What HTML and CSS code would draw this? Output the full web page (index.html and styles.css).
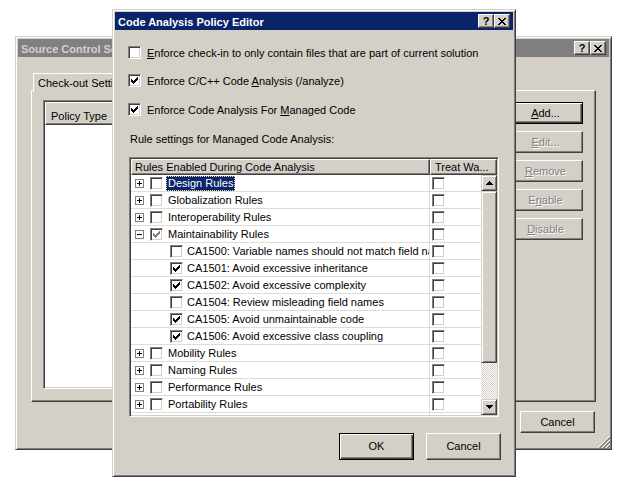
FILE: index.html
```html
<!DOCTYPE html>
<html lang="en">
<head>
<meta charset="utf-8">
<title>Code Analysis Policy Editor</title>
<link rel="stylesheet" href="styles.css">
</head>
<body>
<svg class="defs" aria-hidden="true">
  <symbol id="i-chk" viewBox="0 0 11 11"><path fill="currentColor" d="M2 4h1v3h-1z M3 5h1v3h-1z M4 6h1v3h-1z M5 5h1v3h-1z M6 4h1v3h-1z M7 3h1v3h-1z M8 2h1v3h-1z"/></symbol>
  <symbol id="i-x" viewBox="0 0 8 7"><path fill="currentColor" d="M0 0h2v1h-2z M6 0h2v1h-2z M1 1h2v1h-2z M5 1h2v1h-2z M2 2h4v1h-4z M3 3h2v1h-2z M2 4h4v1h-4z M1 5h2v1h-2z M5 5h2v1h-2z M0 6h2v1h-2z M6 6h2v1h-2z"/></symbol>
  <symbol id="i-plus" viewBox="0 0 9 9"><rect x="0.5" y="0.5" width="8" height="8" fill="#fff" stroke="#808080"/><path fill="#000" d="M2 4h5v1h-5z M4 2h1v5h-1z"/></symbol>
  <symbol id="i-minus" viewBox="0 0 9 9"><rect x="0.5" y="0.5" width="8" height="8" fill="#fff" stroke="#808080"/><path fill="#000" d="M2 4h5v1h-5z"/></symbol>
  <symbol id="i-up" viewBox="0 0 7 4"><path fill="#000" d="M3 0h1v1h-1z M2 1h3v1h-3z M1 2h5v1h-5z M0 3h7v1h-7z"/></symbol>
  <symbol id="i-down" viewBox="0 0 7 4"><path fill="#000" d="M0 0h7v1h-7z M1 1h5v1h-5z M2 2h3v1h-3z M3 3h1v1h-1z"/></symbol>
  <symbol id="i-grip" viewBox="0 0 12 12">
    <g shape-rendering="crispEdges" stroke-width="1">
      <line x1="12" y1="0" x2="0" y2="12" stroke="#fff"/>
      <line x1="12" y1="1" x2="1" y2="12" stroke="#808080"/>
      <line x1="12" y1="2" x2="2" y2="12" stroke="#808080"/>
      <line x1="12" y1="4" x2="4" y2="12" stroke="#fff"/>
      <line x1="12" y1="5" x2="5" y2="12" stroke="#808080"/>
      <line x1="12" y1="6" x2="6" y2="12" stroke="#808080"/>
      <line x1="12" y1="8" x2="8" y2="12" stroke="#fff"/>
      <line x1="12" y1="9" x2="9" y2="12" stroke="#808080"/>
      <line x1="12" y1="10" x2="10" y2="12" stroke="#808080"/>
    </g>
  </symbol>
</svg>

<!-- Background window: Source Control Settings -->
<div class="win win-back">
  <div class="titlebar titlebar-inactive">
    <span class="title">Source Control Settings</span>
    <div class="tbtns">
      <span class="tbtn">?</span>
      <span class="tbtn"><svg class="ic-x"><use href="#i-x"/></svg></span>
    </div>
  </div>
  <div class="bbody">
    <div class="tabstrip">
      <div class="tab">Check-out Settings</div>
    </div>
    <div class="tabpanel">
      <div class="plist">
        <div class="plist-head">
          <div class="ph-cell">Policy Type</div>
          <div class="ph-cell ph-rest"></div>
        </div>
      </div>
      <div class="side-btns">
        <button class="btn btn-sm btn-default"><u>A</u>dd...</button>
        <button class="btn btn-sm btn-dis"><u>E</u>dit...</button>
        <button class="btn btn-sm btn-dis"><u>R</u>emove</button>
        <button class="btn btn-sm btn-dis">E<u>n</u>able</button>
        <button class="btn btn-sm btn-dis"><u>D</u>isable</button>
      </div>
    </div>
    <div class="bfoot">
      <button class="btn btn-sm btn-cancel-back">Cancel</button>
    </div>
  </div>
  <svg class="grip"><use href="#i-grip"/></svg>
</div>

<!-- Foreground window: Code Analysis Policy Editor -->
<div class="win win-front">
  <div class="titlebar titlebar-active">
    <span class="title">Code Analysis Policy Editor</span>
    <div class="tbtns">
      <span class="tbtn">?</span>
      <span class="tbtn"><svg class="ic-x"><use href="#i-x"/></svg></span>
    </div>
  </div>
  <div class="fbody">
    <div class="chk-row">
      <span class="cb cb-3d"></span>
      <span class="chk-text"><u>E</u>nforce check-in to only contain files that are part of current solution</span>
    </div>
    <div class="chk-row r2">
      <span class="cb cb-3d"><svg><use href="#i-chk"/></svg></span>
      <span class="chk-text">Enforce C/C++ Code <u>A</u>nalysis (/analyze)</span>
    </div>
    <div class="chk-row r3">
      <span class="cb cb-3d"><svg><use href="#i-chk"/></svg></span>
      <span class="chk-text">Enforce Code Analysis For <u>M</u>anaged Code</span>
    </div>
    <div class="section-label">Rule settings for Managed Code Analysis:</div>

    <div class="rules-list">
      <div class="rl-head">
        <div class="rh-cell rh-1">Rules Enabled During Code Analysis</div>
        <div class="rh-cell rh-2">Treat Wa...</div>
      </div>
      <div class="rl-body">
        <div class="rows">
          <div class="tr"><div class="c1"><svg class="exp"><use href="#i-plus"/></svg><span class="cb"></span><span class="lbl sel">Design Rules</span></div><div class="c2"><span class="cb"></span></div></div>
          <div class="tr"><div class="c1"><svg class="exp"><use href="#i-plus"/></svg><span class="cb"></span><span class="lbl">Globalization Rules</span></div><div class="c2"><span class="cb"></span></div></div>
          <div class="tr"><div class="c1"><svg class="exp"><use href="#i-plus"/></svg><span class="cb"></span><span class="lbl">Interoperability Rules</span></div><div class="c2"><span class="cb"></span></div></div>
          <div class="tr"><div class="c1"><svg class="exp"><use href="#i-minus"/></svg><span class="cb cb-mixed"><svg><use href="#i-chk"/></svg></span><span class="lbl">Maintainability Rules</span></div><div class="c2"><span class="cb"></span></div></div>
          <div class="tr child"><div class="c1"><span class="cb"></span><span class="lbl">CA1500: Variable names should not match field names</span></div><div class="c2"><span class="cb"></span></div></div>
          <div class="tr child"><div class="c1"><span class="cb"><svg><use href="#i-chk"/></svg></span><span class="lbl">CA1501: Avoid excessive inheritance</span></div><div class="c2"><span class="cb"></span></div></div>
          <div class="tr child"><div class="c1"><span class="cb"><svg><use href="#i-chk"/></svg></span><span class="lbl">CA1502: Avoid excessive complexity</span></div><div class="c2"><span class="cb"></span></div></div>
          <div class="tr child"><div class="c1"><span class="cb"></span><span class="lbl">CA1504: Review misleading field names</span></div><div class="c2"><span class="cb"></span></div></div>
          <div class="tr child"><div class="c1"><span class="cb"><svg><use href="#i-chk"/></svg></span><span class="lbl">CA1505: Avoid unmaintainable code</span></div><div class="c2"><span class="cb"></span></div></div>
          <div class="tr child"><div class="c1"><span class="cb"><svg><use href="#i-chk"/></svg></span><span class="lbl">CA1506: Avoid excessive class coupling</span></div><div class="c2"><span class="cb"></span></div></div>
          <div class="tr"><div class="c1"><svg class="exp"><use href="#i-plus"/></svg><span class="cb"></span><span class="lbl">Mobility Rules</span></div><div class="c2"><span class="cb"></span></div></div>
          <div class="tr"><div class="c1"><svg class="exp"><use href="#i-plus"/></svg><span class="cb"></span><span class="lbl">Naming Rules</span></div><div class="c2"><span class="cb"></span></div></div>
          <div class="tr"><div class="c1"><svg class="exp"><use href="#i-plus"/></svg><span class="cb"></span><span class="lbl">Performance Rules</span></div><div class="c2"><span class="cb"></span></div></div>
          <div class="tr"><div class="c1"><svg class="exp"><use href="#i-plus"/></svg><span class="cb"></span><span class="lbl">Portability Rules</span></div><div class="c2"><span class="cb"></span></div></div>
          <div class="tr"><div class="c1"><svg class="exp"><use href="#i-plus"/></svg><span class="cb"></span><span class="lbl">Reliability Rules</span></div><div class="c2"><span class="cb"></span></div></div>
        </div>
        <div class="vscroll">
          <div class="sb-btn"><svg class="arrow"><use href="#i-up"/></svg></div>
          <div class="sb-thumb"></div>
          <div class="sb-track"></div>
          <div class="sb-btn"><svg class="arrow"><use href="#i-down"/></svg></div>
        </div>
      </div>
    </div>

    <div class="dlg-buttons">
      <button class="btn btn-lg btn-default">OK</button>
      <button class="btn btn-lg">Cancel</button>
    </div>
  </div>
</div>
</body>
</html>
```
FILE: styles.css
```css
* { box-sizing: border-box; }
html, body { margin: 0; padding: 0; }
body {
  width: 628px;
  height: 487px;
  overflow: hidden;
  position: relative;
  background: #fff;
  font-family: "Liberation Sans", Arial, sans-serif;
  font-size: 11px;
  line-height: 13px;
  color: #000;
}
.defs { position: absolute; width: 0; height: 0; overflow: hidden; }
u { text-decoration: underline; text-underline-offset: 1px; text-decoration-thickness: 1px; }

/* ---------- window frame ---------- */
.win {
  position: absolute;
  display: flex;
  flex-direction: column;
  background: #d4d0c8;
  border: 1px solid;
  border-color: #d4d0c8 #404040 #404040 #d4d0c8;
  box-shadow: inset 1px 1px #fff, inset -1px -1px #808080;
  padding: 2px;
}
.win-back { left: 15px; top: 36px; width: 597px; height: 414px; z-index: 1; }
.win-front { left: 112px; top: 9px; width: 404px; height: 468px; z-index: 2; }

.titlebar {
  flex: none;
  height: 18px;
  display: flex;
  align-items: center;
  padding: 0 3px 0 3px;
}
.titlebar-active { background: #0a246a; color: #fff; }
.titlebar-inactive { background: #808080; color: #d4d0c8; }
.title {
  flex: 1;
  min-width: 0;
  font-weight: bold;
  line-height: 18px;
  padding-top: 1px;
  white-space: nowrap;
  overflow: hidden;
}
.tbtns { flex: none; display: flex; }
.tbtn {
  width: 16px;
  height: 14px;
  display: flex;
  align-items: center;
  justify-content: center;
  background: #d4d0c8;
  border: 1px solid;
  border-color: #fff #404040 #404040 #fff;
  box-shadow: inset -1px -1px #808080;
  color: #000;
  font-weight: bold;
  font-size: 11px;
  line-height: 12px;
}
.ic-x { width: 8px; height: 7px; display: block; margin-left: -1px; }

/* ---------- buttons ---------- */
.btn {
  display: flex;
  align-items: center;
  justify-content: center;
  padding: 0;
  margin: 0;
  font: inherit;
  color: #000;
  background: #d4d0c8;
  border: 1px solid;
  border-color: #fff #404040 #404040 #fff;
  box-shadow: inset -1px -1px #808080;
  border-radius: 0;
}
.btn-default {
  border-color: #000;
  box-shadow: inset 1px 1px #fff, inset -1px -1px #404040, inset -2px -2px #808080;
}
.btn-sm { width: 75px; height: 22px; }
.btn-lg { width: 75px; height: 27px; }
.btn-dis { color: #808080; text-shadow: 1px 1px 0 #fff; }

/* ---------- checkbox ---------- */
.cb {
  flex: none;
  width: 13px;
  height: 13px;
  display: flex;
  background: #fff;
  color: #000;
  border: 1px solid;
  border-color: #808080 #fff #fff #808080;
  box-shadow: inset 1px 1px #404040, inset -1px -1px #d4d0c8;
}
.cb svg { width: 11px; height: 11px; display: block; }
.cb-mixed { color: #808080; }

/* ---------- front dialog body ---------- */
.fbody {
  flex: 1;
  display: flex;
  flex-direction: column;
  align-items: flex-start;
  padding: 16px 12px 0 13px;
}
.chk-row {
  display: flex;
  align-items: center;
  gap: 6px;
  height: 13px;
  white-space: nowrap;
}
.chk-text { line-height: 13px; padding-top: 1px; }
.chk-row.r2 { margin-top: 15px; }
.chk-row.r3 { margin-top: 16px; }
.section-label { margin-top: 16px; padding-left: 2px; line-height: 13px; padding-top: 1px; }

.rules-list {
  margin: 11px 0 0 1px;
  width: 370px;
  height: 260px;
  display: flex;
  flex-direction: column;
  background: #fff;
  border: 1px solid;
  border-color: #808080 #fff #fff #808080;
  box-shadow: inset 1px 1px #404040, inset -1px -1px #d4d0c8;
  padding: 1px;
  overflow: hidden;
}
.rl-head { flex: none; display: flex; height: 16px; }
.rh-cell {
  height: 16px;
  background: #d4d0c8;
  border: 1px solid;
  border-color: #fff #404040 #404040 #fff;
  box-shadow: inset -1px -1px #808080;
  line-height: 14px;
  padding-left: 3px;
  white-space: nowrap;
  overflow: hidden;
}
.rh-1 { width: 299px; }
.rh-2 { flex: 1; padding-left: 4px; }

.rl-body { flex: 1; min-height: 0; display: flex; }
.rows { flex: 1; min-width: 0; overflow: hidden; }
.tr {
  display: flex;
  height: 17px;
  border-bottom: 1px solid #dedcd6;
}
.c1 {
  width: 299px;
  flex: none;
  display: flex;
  align-items: center;
  padding-left: 4px;
  border-right: 1px solid #dedcd6;
  overflow: hidden;
  white-space: nowrap;
}
.child .c1 { padding-left: 39px; }
.c2 { flex: 1; display: flex; align-items: center; padding-left: 2px; }
.exp { flex: none; width: 9px; height: 9px; margin-right: 6px; display: block; }
.lbl {
  flex: none;
  margin-left: 3px;
  padding: 0 1px;
  height: 15px;
  line-height: 13px;
  border: 1px solid transparent;
}
.child .lbl { margin-left: 2px; }
.lbl.sel { background: #0a246a; color: #fff; border: 1px dotted #f5db95; }

.vscroll { flex: none; width: 16px; display: flex; flex-direction: column; }
.sb-btn, .sb-thumb {
  flex: none;
  background: #d4d0c8;
  border: 1px solid;
  border-color: #d4d0c8 #404040 #404040 #d4d0c8;
  box-shadow: inset 1px 1px #fff, inset -1px -1px #808080;
}
.sb-btn { height: 16px; display: flex; align-items: center; justify-content: center; }
.sb-thumb { height: 172px; }
.sb-track {
  flex: 1;
  background: repeating-conic-gradient(#fff 0 25%, #d4d0c8 0 50%) 0 0 / 2px 2px;
}
.arrow { width: 7px; height: 4px; display: block; }

.dlg-buttons {
  align-self: stretch;
  display: flex;
  justify-content: flex-end;
  gap: 12px;
  margin-top: 16px;
}

/* ---------- back dialog body ---------- */
.bbody {
  flex: 1;
  display: flex;
  flex-direction: column;
  padding: 16px 13px 0 13px;
}
.tabstrip { flex: none; display: flex; height: 17px; padding-left: 2px; }
.tab {
  position: relative;
  z-index: 1;
  height: 19px;
  padding: 3px 6px 0 4px;
  background: #d4d0c8;
  border: 1px solid;
  border-bottom: none;
  border-color: #fff #404040 transparent #fff;
  box-shadow: inset -1px 0 #808080;
  white-space: nowrap;
}
.tabpanel {
  flex: none;
  height: 312px;
  display: flex;
  align-items: flex-start;
  gap: 8px;
  padding: 9px 0 0 11px;
  border: 1px solid;
  border-color: #fff #404040 #404040 #fff;
  box-shadow: inset -1px -1px #808080;
}
.plist {
  width: 457px;
  height: 289px;
  background: #fff;
  border: 1px solid;
  border-color: #808080 #fff #fff #808080;
  box-shadow: inset 1px 1px #404040, inset -1px -1px #d4d0c8;
  padding: 1px;
}
.plist-head { display: flex; height: 23px; }
.ph-cell {
  width: 160px;
  height: 23px;
  background: #d4d0c8;
  border: 1px solid;
  border-color: #fff #404040 #404040 #fff;
  box-shadow: inset -1px -1px #808080;
  padding: 7px 0 0 5px;
  line-height: 13px;
}
.ph-rest { flex: 1; width: auto; }
.side-btns { display: flex; flex-direction: column; gap: 7px; margin-top: 2px; }
.bfoot { display: flex; justify-content: flex-end; padding-top: 9px; }
.btn-cancel-back { margin-right: 1px; }
.grip { position: absolute; right: 1px; bottom: 1px; width: 12px; height: 12px; }
```
